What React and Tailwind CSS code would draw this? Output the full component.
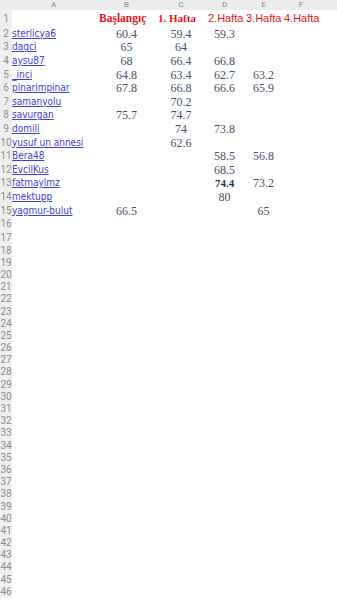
import React from 'react'

// column widths of the visible sheet: row numbers, A..F, then the rest
const cols = 'grid grid-cols-[12px_83px_63px_46px_41px_37px_38px_1fr]'

const rows = [
  ['sterlicya6', '60.4', '59.4', '59.3', '', ''],
  ['dagci', '65', '64', '', '', ''],
  ['aysu87', '68', '66.4', '66.8', '', ''],
  ['_inci', '64.8', '63.4', '62.7', '63.2', ''],
  ['pinarimpinar', '67.8', '66.8', '66.6', '65.9', ''],
  ['samanyolu', '', '70.2', '', '', ''],
  ['savurgan', '75.7', '74.7', '', '', ''],
  ['domili', '', '74', '73.8', '', ''],
  ['yusuf un annesi', '', '62.6', '', '', ''],
  ['Bera48', '', '', '58.5', '56.8', ''],
  ['EvcilKus', '', '', '68.5', '', ''],
  ['fatmaylmz', '', '', '74.4', '73.2', ''],
  ['mektupp', '', '', '80', '', ''],
  ['yagmur-bulut', '66.5', '', '', '65', ''],
]

const RowNum = ({ n }) => (
  <div className="bg-[#efefef] text-[#8d8d8d] text-[10px] leading-none flex items-center justify-center font-['Roboto',sans-serif] whitespace-nowrap">
    {n}
  </div>
)

const Num = ({ v, bold }) => (
  <div className={`flex items-center justify-center font-['Liberation_Serif',serif] leading-none ${bold ? 'font-bold text-[#2e3a4a] text-[11px]' : 'text-[#45546b] text-[12px]'}`}>
    {v}
  </div>
)

export default function App() {
  const empty = Array.from({ length: 29 }, (_, i) => i + 18)
  return (
    <div className="w-[337px] h-[600px] overflow-hidden bg-white">
      {/* column header */}
      <div className={`${cols} h-[10px] bg-[#ececec] text-[#8a8a8a] text-[8px] leading-none font-['Roboto',sans-serif]`}>
        <div />
        {['A', 'B', 'C', 'D', 'E', 'F', ''].map((c, i) => (
          <div key={i} className="flex items-center justify-center">{c}</div>
        ))}
      </div>

      {/* row 1: titles */}
      <div className={`${cols} h-[17px]`}>
        <RowNum n={1} />
        <div />
        <div className="flex items-center justify-start pl-[4px] text-[#e8141c] font-bold text-[11.5px] leading-none font-['Liberation_Serif',serif] whitespace-nowrap">Başlangıç</div>
        <div className="flex items-center justify-start text-[#e8141c] font-bold text-[11px] leading-none font-['Liberation_Serif',serif] whitespace-nowrap">1. Hafta</div>
        <div className="flex items-center justify-start pl-[4px] text-[#e8141c] text-[11px] leading-none font-['Liberation_Sans',sans-serif] whitespace-nowrap">2.Hafta</div>
        <div className="flex items-center justify-start pl-[1px] text-[#e8141c] text-[11px] leading-none font-['Liberation_Sans',sans-serif] whitespace-nowrap">3.Hafta</div>
        <div className="flex items-center justify-start pl-[2px] text-[#e8141c] text-[11px] leading-none font-['Liberation_Sans',sans-serif] whitespace-nowrap">4.Hafta</div>
        <div />
      </div>

      {/* rows 2-15: data */}
      {rows.map((r, i) => (
        <div key={i} className={`${cols} h-[13.6px]`}>
          <RowNum n={i + 2} />
          <div className="flex items-center overflow-hidden whitespace-nowrap">
            <a href="#" className="text-[#4040d8] underline text-[10px] leading-none font-['Liberation_Sans_Narrow','Arial_Narrow','DejaVu_Sans_Condensed',sans-serif]">{r[0]}</a>
          </div>
          {r.slice(1).map((v, j) => (
            <Num key={j} v={v} bold={v === '74.4'} />
          ))}
          <div />
        </div>
      ))}

      {/* rows 16-17 */}
      {[16, 17].map((n) => (
        <div key={n} className={`${cols} h-[13.6px]`}>
          <RowNum n={n} />
        </div>
      ))}

      {/* rows 18-46 */}
      {empty.map((n) => (
        <div key={n} className={`${cols} h-[12.2px]`}>
          <RowNum n={n} />
        </div>
      ))}
    </div>
  )
}
